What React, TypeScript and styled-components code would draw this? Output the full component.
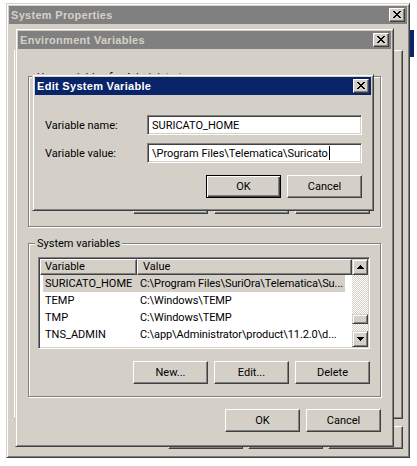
import React from 'react';
import styled, { createGlobalStyle, css } from 'styled-components';

const face = '#d4d0c8';

const GlobalStyle = createGlobalStyle`
  html, body {
    margin: 0;
    padding: 0;
    background: #fff;
  }
  body {
    font-family: Roboto, "Liberation Sans", Arial, sans-serif;
    font-size: 11px;
    color: #000;
  }
`;

const windowBevel = css`
  border: 1px solid;
  border-color: ${face} #404040 #404040 ${face};
  box-shadow: inset 1px 1px #fff, inset -1px -1px #808080;
`;

const buttonBevel = css`
  border: 1px solid;
  border-color: #fff #404040 #404040 #fff;
  box-shadow: inset -1px -1px #808080;
`;

const sunken = css`
  border: 1px solid;
  border-color: #808080 #fff #fff #808080;
  box-shadow: inset 1px 1px #404040, inset -1px -1px ${face};
`;

const Desktop = styled.div`
  position: relative;
  width: 417px;
  height: 466px;
  overflow: hidden;
  background: #fff;
`;

const BehindItem = styled.div`
  position: absolute;
  left: 410px;
  top: 30px;
  width: 4px;
  height: 27px;
  background: #0a246a;
`;

const Window = styled.div<{ $x: number; $y: number; $w: number; $h: number }>`
  position: absolute;
  left: ${p => p.$x}px;
  top: ${p => p.$y}px;
  width: ${p => p.$w}px;
  height: ${p => p.$h}px;
  box-sizing: border-box;
  padding: 2px;
  background: ${face};
  ${windowBevel}
  display: flex;
  flex-direction: column;
`;

const TitleBar = styled.div<{ $active?: boolean }>`
  flex: none;
  height: 18px;
  display: flex;
  align-items: center;
  justify-content: space-between;
  padding: 0 2px 0 2px;
  background: ${p => (p.$active ? '#0a246a' : '#808080')};
  color: ${p => (p.$active ? '#fff' : face)};
  font-family: "Liberation Sans", Arial, sans-serif;
  font-weight: bold;
  font-size: 11px;
  letter-spacing: 0.3px;
  white-space: nowrap;
`;

const CloseBtn = styled.div`
  width: 16px;
  height: 14px;
  box-sizing: border-box;
  background: ${face};
  ${buttonBevel}
  display: flex;
  align-items: center;
  justify-content: center;
  svg {
    display: block;
    margin: 0 1px 1px 0;
  }
`;

const Button = styled.button<{ $default?: boolean }>`
  width: 75px;
  height: 23px;
  box-sizing: border-box;
  padding: 0;
  margin: 0;
  font: inherit;
  color: #000;
  background: ${face};
  display: flex;
  align-items: center;
  justify-content: center;
  ${p =>
    p.$default
      ? css`
          border: 1px solid #000;
          box-shadow: inset 1px 1px #fff, inset -1px -1px #404040, inset -2px -2px #808080;
        `
      : buttonBevel}
`;

const ButtonRow = styled.div<{ $gap: number; $top?: number }>`
  display: flex;
  justify-content: flex-end;
  gap: ${p => p.$gap}px;
  margin-top: ${p => p.$top ?? 0}px;
  flex: none;
`;

/* ---------- System Properties ---------- */

const SysBody = styled.div`
  flex: 1;
  display: flex;
  flex-direction: column;
  padding: 26px 4px 6px 5px;
`;

const TabPanel = styled.div`
  flex: 1;
  background: ${face};
  border: 1px solid;
  border-color: #fff #404040 #404040 #fff;
  box-shadow: inset -1px -1px #808080;
`;

/* ---------- Environment Variables ---------- */

const EnvBody = styled.div`
  flex: 1;
  display: flex;
  flex-direction: column;
  padding: 0 10px 12px 10px;
`;

const Group = styled.fieldset<{ $top: number }>`
  margin: ${p => p.$top}px 0 0 0;
  padding: 0;
  min-inline-size: 0;
  border: 1px solid #808080;
  box-shadow: inset 1px 1px #fff, 1px 1px #fff;
`;

const Legend = styled.legend<{ $padTop?: number }>`
  margin-left: 6px;
  padding: ${p => p.$padTop ?? 0}px 2px 0 2px;
  line-height: 13px;
  background: ${face};
`;

const GroupInner = styled.div`
  padding: 7px 10px 12px 9px;
  display: flex;
  flex-direction: column;
`;

const ListView = styled.div`
  height: 92px;
  box-sizing: border-box;
  background: #fff;
  ${sunken}
  padding: 1px;
  display: flex;
`;

const ListBody = styled.div`
  flex: 1;
  display: flex;
  flex-direction: column;
  overflow: hidden;
`;

const Header = styled.div`
  display: flex;
  height: 16px;
  flex: none;
`;

const HeaderCell = styled.div<{ $w?: number }>`
  ${p => (p.$w ? `width: ${p.$w}px; flex: none;` : 'flex: 1;')}
  box-sizing: border-box;
  background: ${face};
  ${buttonBevel}
  line-height: 14px;
  padding-left: ${p => (p.$w ? 4 : 5)}px;
  white-space: nowrap;
`;

const Row = styled.div<{ $selected?: boolean }>`
  display: flex;
  height: 17px;
  line-height: 17px;
  flex: none;
  margin: 0 7px 0 3px;
  background: ${p => (p.$selected ? face : 'transparent')};
  white-space: nowrap;
`;

const NameCell = styled.div`
  width: 94px;
  flex: none;
  padding-left: 2px;
  box-sizing: border-box;
  overflow: hidden;
`;

const ValueCell = styled.div`
  flex: 1;
  padding-left: 3px;
  letter-spacing: -0.1px;
  overflow: hidden;
`;

const ScrollBar = styled.div`
  width: 16px;
  flex: none;
  display: flex;
  flex-direction: column;
`;

const ScrollBtn = styled.div`
  width: 16px;
  height: 16px;
  box-sizing: border-box;
  background: ${face};
  border: 1px solid;
  border-color: ${face} #404040 #404040 ${face};
  box-shadow: inset 1px 1px #fff, inset -1px -1px #808080;
  display: flex;
  align-items: center;
  justify-content: center;
  flex: none;
`;

const Track = styled.div`
  flex: 1;
  background: repeating-conic-gradient(#fff 0 25%, ${face} 0 50%) 0 0 / 2px 2px;
  display: flex;
  flex-direction: column;
`;

const Thumb = styled.div<{ $offset: number }>`
  margin-top: ${p => p.$offset}px;
  height: 10px;
  box-sizing: border-box;
  background: ${face};
  border: 1px solid;
  border-color: ${face} #404040 #404040 ${face};
  box-shadow: inset 1px 1px #fff, inset -1px -1px #808080;
`;

/* ---------- Edit System Variable ---------- */

const EditBody = styled.div`
  flex: 1;
  display: flex;
  flex-direction: column;
  padding: 20px 9px 10px 10px;
`;

const FieldRow = styled.div<{ $top?: number }>`
  display: flex;
  align-items: center;
  height: 20px;
  margin-top: ${p => p.$top ?? 0}px;
`;

const FieldLabel = styled.div`
  width: 102px;
  flex: none;
`;

const Field = styled.div`
  flex: 1;
  height: 20px;
  box-sizing: border-box;
  background: #fff;
  ${sunken}
  padding: 0 4px;
  display: flex;
  align-items: center;
  white-space: nowrap;
  overflow: hidden;
`;

const Caret = styled.span`
  display: inline-block;
  width: 1px;
  height: 14px;
  background: #000;
  margin-left: 1px;
`;

const CloseGlyph = () => (
  <svg width="8" height="7" viewBox="0 0 8 7" shapeRendering="crispEdges">
    <path
      fill="#000"
      d="M0 0h2v1H0zM6 0h2v1H6zM1 1h2v1H1zM5 1h2v1H5zM2 2h4v1H2zM3 3h2v1H3zM2 4h4v1H2zM1 5h2v1H1zM5 5h2v1H5zM0 6h2v1H0zM6 6h2v1H6z"
    />
  </svg>
);

const Arrow = ({ down }: { down?: boolean }) => (
  <svg width="7" height="4" viewBox="0 0 7 4" shapeRendering="crispEdges">
    <path
      fill="#000"
      d={down ? 'M0 0h7v1H0zM1 1h5v1H1zM2 2h3v1H2zM3 3h1v1H3z' : 'M3 0h1v1H3zM2 1h3v1H2zM1 2h5v1H1zM0 3h7v1H0z'}
    />
  </svg>
);

const Title = ({ text, active }: { text: string; active?: boolean }) => (
  <TitleBar $active={active}>
    <span>{text}</span>
    <CloseBtn>
      <CloseGlyph />
    </CloseBtn>
  </TitleBar>
);

interface Variable {
  name: string;
  value: string;
}

const systemVars: Variable[] = [
  { name: 'SURICATO_HOME', value: 'C:\\Program Files\\SuriOra\\Telematica\\Su...' },
  { name: 'TEMP', value: 'C:\\Windows\\TEMP' },
  { name: 'TMP', value: 'C:\\Windows\\TEMP' },
  { name: 'TNS_ADMIN', value: 'C:\\app\\Administrator\\product\\11.2.0\\d...' },
];

const VarList = ({ rows, selected, thumb }: { rows: Variable[]; selected?: number; thumb: number }) => (
  <ListView>
    <ListBody>
      <Header>
        <HeaderCell $w={97}>Variable</HeaderCell>
        <HeaderCell>Value</HeaderCell>
      </Header>
      {rows.map((r, i) => (
        <Row key={r.name} $selected={i === selected}>
          <NameCell>{r.name}</NameCell>
          <ValueCell>{r.value}</ValueCell>
        </Row>
      ))}
    </ListBody>
    <ScrollBar>
      <ScrollBtn>
        <Arrow />
      </ScrollBtn>
      <Track>
        <Thumb $offset={thumb} />
      </Track>
      <ScrollBtn>
        <Arrow down />
      </ScrollBtn>
    </ScrollBar>
  </ListView>
);

const App: React.FC = () => {
  return (
    <Desktop>
      <GlobalStyle />
      <BehindItem />

      <Window $x={6} $y={3} $w={404} $h={455}>
        <Title text="System Properties" />
        <SysBody>
          <TabPanel />
          <ButtonRow $gap={5} $top={7}>
            <Button>OK</Button>
            <Button>Cancel</Button>
            <Button>Apply</Button>
          </ButtonRow>
        </SysBody>
      </Window>

      <Window $x={15} $y={28} $w={379} $h={419}>
        <Title text="Environment Variables" />
        <EnvBody>
          <Group $top={19}>
            <Legend $padTop={3}>User variables for Administrator</Legend>
            <GroupInner>
              <VarList rows={[]} thumb={0} />
              <ButtonRow $gap={6} $top={8}>
                <Button>New...</Button>
                <Button>Edit...</Button>
                <Button>Delete</Button>
              </ButtonRow>
            </GroupInner>
          </Group>
          <Group $top={10}>
            <Legend>System variables</Legend>
            <GroupInner>
              <VarList rows={systemVars} selected={0} thumb={39} />
              <ButtonRow $gap={6} $top={12}>
                <Button>New...</Button>
                <Button>Edit...</Button>
                <Button>Delete</Button>
              </ButtonRow>
            </GroupInner>
          </Group>
          <ButtonRow $gap={6} $top={12}>
            <Button>OK</Button>
            <Button>Cancel</Button>
          </ButtonRow>
        </EnvBody>
      </Window>

      <Window $x={32} $y={74} $w={342} $h={137}>
        <Title text="Edit System Variable" active />
        <EditBody>
          <FieldRow>
            <FieldLabel>Variable name:</FieldLabel>
            <Field>SURICATO_HOME</Field>
          </FieldRow>
          <FieldRow $top={8}>
            <FieldLabel>Variable value:</FieldLabel>
            <Field>
              \Program Files\Telematica\Suricato
              <Caret />
            </Field>
          </FieldRow>
          <ButtonRow $gap={6} $top={12}>
            <Button $default>OK</Button>
            <Button>Cancel</Button>
          </ButtonRow>
        </EditBody>
      </Window>
    </Desktop>
  );
};

export default App;
